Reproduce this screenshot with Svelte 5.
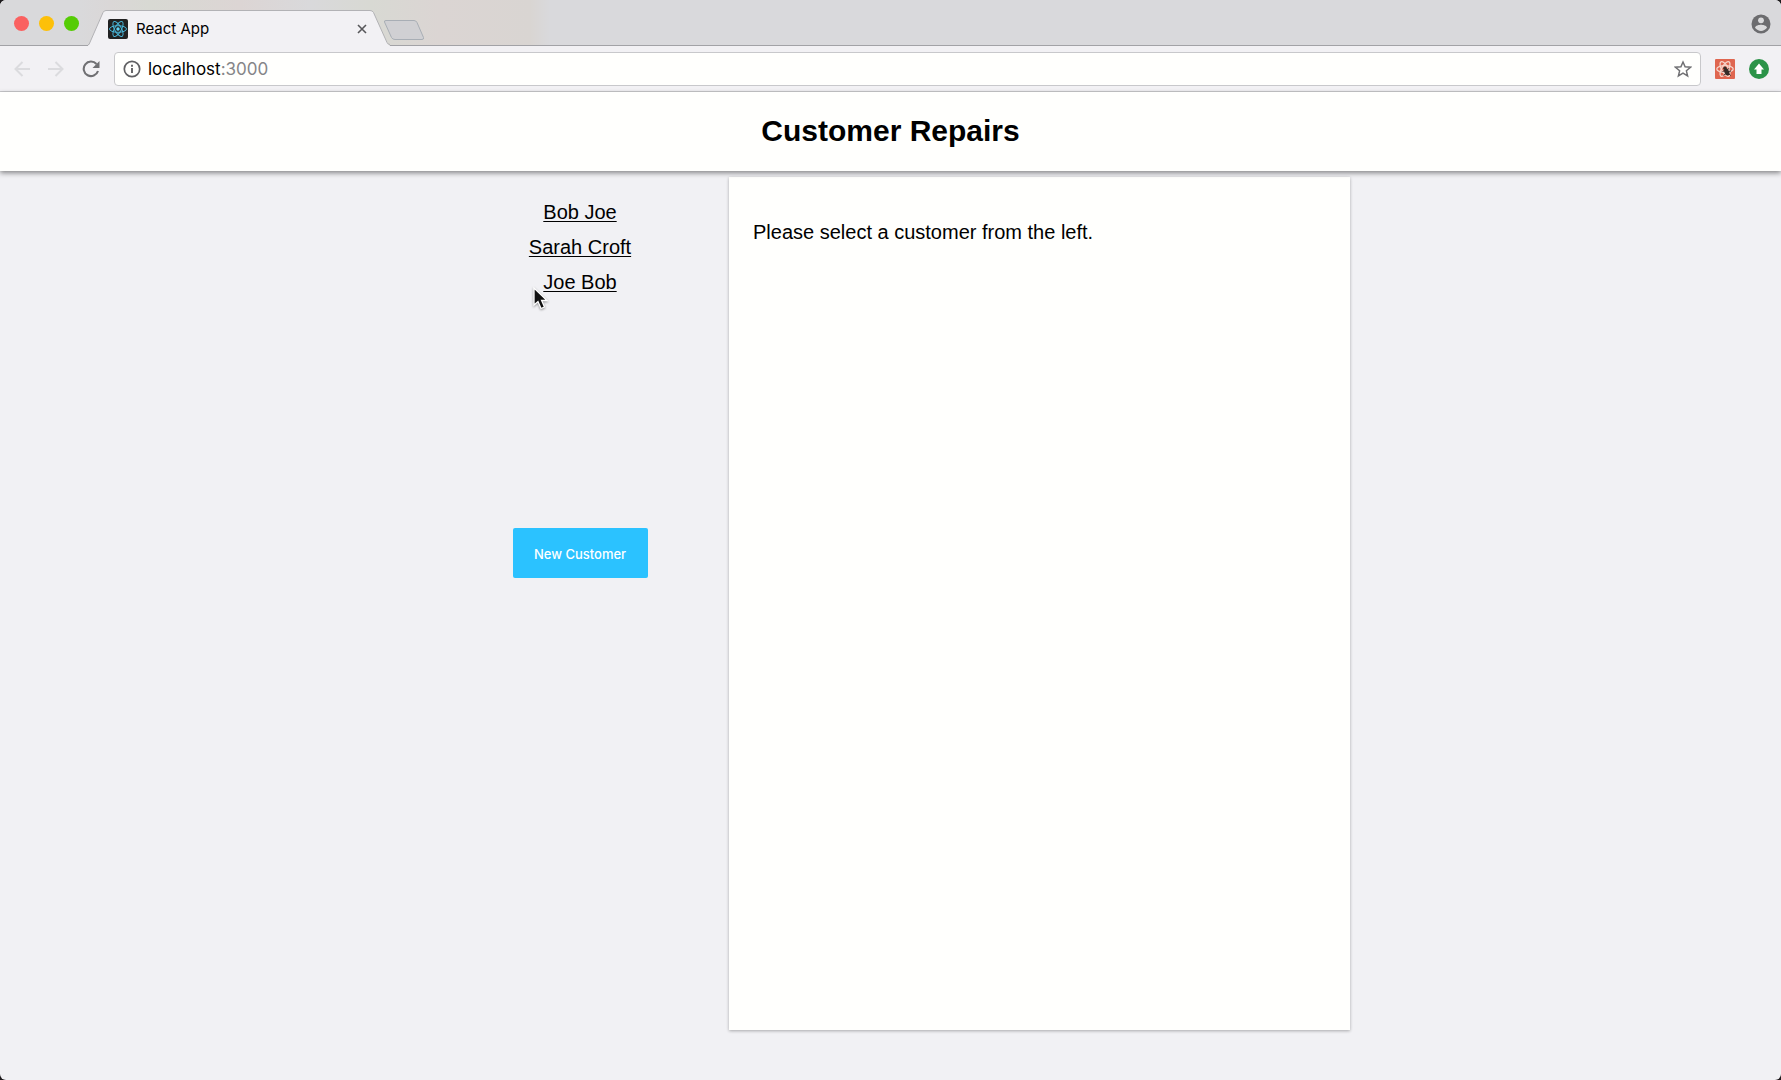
<script>
  const customers = ['Bob Joe', 'Sarah Croft', 'Joe Bob'];
  let url = $state('localhost:3000');
  const petals = [0, 60, 120];
</script>

<div class="window">
  <div class="tabstrip">
    <div class="lights">
      <button class="light red" aria-label="Close window"></button>
      <button class="light yellow" aria-label="Minimize window"></button>
      <button class="light green" aria-label="Zoom window"></button>
    </div>
    <div class="tab">
      <svg class="shape" viewBox="0 0 302 36" aria-hidden="true">
        <path d="M0 35.5 L1 34.500 L15 2.500 Q16 .5 18 .5 H282 Q284.500 .5 285.500 2.500 L300 34.500 L302 35.500 V36 H0Z" fill="#f2f1f4" />
        <path d="M0 34.500 H1 L15 2.500 Q16 .5 18 .5 H282 Q284.500 .5 285.500 2.500 L299 32.500 Q300 34.500 302 34.500" fill="none" stroke="#b2b2b5" />
      </svg>
      <svg class="favicon" viewBox="0 0 20 20" aria-hidden="true">
        <rect width="20" height="20" rx="2" fill="#222" />
        {#each petals as angle}
          <ellipse cx="10" cy="10" rx="8.500" ry="3.300" fill="none" stroke="#48b5d8" stroke-width="1" transform="rotate({angle} 10 10)" />
        {/each}
        <circle cx="10" cy="10" r="1.700" fill="#5fd3f5" />
      </svg>
      <span class="tab-title">React App</span>
      <button class="icon" aria-label="Close tab">
        <svg width="10" height="10" viewBox="0 0 10 10"><path d="M1 1 9 9M9 1 1 9" stroke="#57575a" stroke-width="1.600" /></svg>
      </button>
    </div>
    <button class="icon newtab" aria-label="New tab">
      <svg width="42" height="22" viewBox="0 0 42 22"><path d="M3 1.500H31Q33 1.500 34 3.500L40.500 18.500Q41 20.500 39 20.500H12Q9.500 20.500 8.500 18.500L1.500 3Q1 1.500 3 1.500Z" fill="#d0d0d3" stroke="#a8aeb5" /></svg>
    </button>
    <button class="icon profile" aria-label="Profile">
      <svg width="20" height="20" viewBox="0 0 20 20"><circle cx="10" cy="10" r="9.500" fill="#6c6c6f" /><circle cx="10" cy="6.300" r="2.900" fill="#dadadc" /><path d="M4 13.800C4.500 11.500 8 10.800 10 10.800S15.500 11.500 16 13.800C14.500 15.800 12.300 17 10 17S5.500 15.800 4 13.800Z" fill="#dadadc" /></svg>
    </button>
  </div>

  <div class="toolbar">
    <button class="icon nav" aria-label="Back">
      <svg width="16" height="16" viewBox="0 0 16 16"><path d="M16 8H1.500M8.500 1 1.500 8 8.500 15" fill="none" stroke="#dbdbde" stroke-width="2" /></svg>
    </button>
    <button class="icon nav" aria-label="Forward">
      <svg width="16" height="16" viewBox="0 0 16 16"><path d="M0 8H14.500M7.500 1 14.500 8 7.500 15" fill="none" stroke="#dbdbde" stroke-width="2" /></svg>
    </button>
    <button class="icon" aria-label="Reload">
      <svg width="18" height="18" viewBox="0 0 18 18"><path d="M14.500 4A7.300 7.300 0 1 0 16 11" fill="none" stroke="#707073" stroke-width="2.100" /><path d="M17.500 1V8H10.500Z" fill="#707073" /></svg>
    </button>
    <div class="omnibox">
      <svg width="18" height="18" viewBox="0 0 18 18" aria-hidden="true"><circle cx="9" cy="9" r="7.700" fill="none" stroke="#606063" stroke-width="1.700" /><path d="M9 8V13M9 4.800V6.700" stroke="#606063" stroke-width="1.900" /></svg>
      <label class="address">
        <span class="url" aria-hidden="true">localhost<span class="port">:3000</span></span>
        <input type="text" aria-label="Address" bind:value={url} />
      </label>
      <button class="icon" aria-label="Bookmark">
        <svg width="18" height="18" viewBox="0 0 18 18"><path d="M9 2 11.100 6.700 16.500 7.200 12.400 10.800 13.600 16 9 13.200 4.400 16 5.600 10.800 1.500 7.200 6.900 6.700Z" fill="none" stroke="#707073" stroke-width="1.500" /></svg>
      </button>
    </div>
    <button class="icon" aria-label="React Developer Tools">
      <svg width="20" height="20" viewBox="0 0 20 20">
        <rect width="20" height="20" rx="1" fill="#df6650" />
        {#each petals as angle}
          <ellipse cx="10" cy="10" rx="8.200" ry="3.300" fill="none" stroke="#f5d5cb" stroke-width="1.300" transform="rotate({angle} 10 10)" />
        {/each}
        <ellipse cx="11.800" cy="13" rx="2.300" ry="3.700" transform="rotate(-25 11.800 13)" fill="#342b27" />
        <circle cx="10" cy="9.200" r="1.700" fill="#342b27" />
        <path d="M7.500 12.500 10 11.500M8.500 16.500 11 14.500M12 11 14 9.500M13.500 12.500 16 12M14 15 15.800 16.500" stroke="#342b27" />
      </svg>
    </button>
    <button class="icon" aria-label="Update available">
      <svg width="20" height="20" viewBox="0 0 20 20"><circle cx="10" cy="10" r="10" fill="#2b9348" /><path d="M10 4.500 15 10.500H12.500V15H7.500V10.500H5Z" fill="#fff" /></svg>
    </button>
  </div>

  <header>
    <h1>Customer Repairs</h1>
  </header>

  <main>
    <aside>
      <nav>
        {#each customers as name}
          <a href="#customer">{name}</a>
        {/each}
      </nav>
      <button class="new-customer">New Customer</button>
    </aside>
    <section>
      <p>Please select a customer from the left.</p>
    </section>
  </main>

  <svg class="cursor" width="18" height="25" viewBox="0 0 18 25" aria-hidden="true">
    <path d="M2 2V19L6 15.500 9 22.500 12.500 21 9.600 14.500H15Z" fill="#111" stroke="#fff" stroke-width="1.300" />
  </svg>
</div>

<style>
  :global(body) {
    margin: 0;
    background: #1d1a1c;
  }
  .window {
    position: relative;
    display: flex;
    flex-direction: column;
    min-height: 100vh;
    overflow: hidden;
    border-radius: 6px;
    background: #f1f1f4;
    font-family: 'Liberation Sans', Arial, sans-serif;
    color: #000;
  }
  button {
    margin: 0;
    padding: 0;
    border: 0;
    background: none;
    font: inherit;
    cursor: pointer;
  }
  .icon {
    display: flex;
    flex: none;
    align-items: center;
    justify-content: center;
  }
  .tabstrip {
    display: flex;
    box-sizing: border-box;
    height: 46px;
    padding: 0 10px 0 14px;
    border-bottom: 1px solid #a2a2a6;
    background: linear-gradient(90deg, #d9d9db 80px, #dad7d7 110px, #d8d9d3 150px, #dcd5d4 240px, #d9d9db 310px, #d8d9d3 370px, #dbd5d3 440px, #d9d5d2 530px, #d9d9dc 550px);
  }
  .lights {
    display: flex;
    gap: 10px;
    padding-top: 16px;
    width: 74px;
  }
  .light {
    width: 15px;
    height: 15px;
    border-radius: 50%;
  }
  .red { background: #fa6160; }
  .yellow { background: #fdc009; }
  .green { background: #55cc05; }
  .tab {
    position: relative;
    display: flex;
    align-items: center;
    box-sizing: border-box;
    width: 302px;
    height: 36px;
    margin-top: 10px;
    padding: 1px 22px 0 20px;
    gap: 8px;
  }
  .shape {
    position: absolute;
    inset: 0;
    width: 100%;
    height: 100%;
  }
  .favicon {
    position: relative;
    flex: none;
    width: 20px;
    height: 20px;
  }
  .tab-title {
    position: relative;
    flex: 1;
    font: 15px/20px Inter, sans-serif;
  }
  .tab .icon {
    position: relative;
    width: 12px;
    height: 20px;
  }
  .newtab {
    align-self: flex-start;
    margin: 19px 0 0 -7px;
  }
  .profile {
    align-self: flex-start;
    margin: 14px 0 0 auto;
  }
  .toolbar {
    display: flex;
    align-items: center;
    box-sizing: border-box;
    height: 46px;
    padding: 0 12px 0 14px;
    gap: 14px;
    border-bottom: 1px solid #cacacd;
    background: #f2f1f4;
  }
  .nav {
    margin-right: 4px;
  }
  .omnibox {
    display: flex;
    flex: 1;
    align-items: center;
    box-sizing: border-box;
    height: 34px;
    padding: 0 8px;
    gap: 7px;
    border: 1px solid #c8c8cb;
    border-radius: 4px;
    background: #fffffd;
  }
  .address {
    display: grid;
    flex: 1;
    font: 17px/24px Inter, sans-serif;
  }
  .url,
  input {
    grid-area: 1 / 1;
  }
  .port {
    color: #858588;
  }
  input {
    min-width: 0;
    padding: 0;
    border: 0;
    outline: 0;
    background: none;
    font: inherit;
    color: transparent;
  }
  header {
    z-index: 1;
    background: #fffffd;
    box-shadow: 0 2px 5px rgba(0, 0, 0, 0.45);
  }
  h1 {
    margin: 0;
    padding: 21px 0 22px;
    font-size: 30px;
    line-height: 36px;
    text-align: center;
  }
  main {
    display: grid;
    flex: 1;
    grid-template-columns: 298fr 621fr;
    box-sizing: border-box;
    width: 100%;
    max-width: 919px;
    margin: 0 auto;
    padding: 6px 0 50px;
    font-size: 20px;
  }
  aside {
    display: flex;
    flex-direction: column;
    align-items: center;
    padding-top: 23px;
  }
  nav {
    display: flex;
    flex-direction: column;
    align-items: center;
    gap: 11px;
    height: 328px;
  }
  a {
    line-height: 24px;
    color: #000;
    text-decoration-thickness: 1px;
    text-underline-offset: 2px;
  }
  .new-customer {
    width: 135px;
    height: 50px;
    padding-top: 2px;
    border-radius: 2px;
    background: #2bc2ff;
    color: #fff;
    font: 500 13px/20px Inter, sans-serif;
  }
  section {
    background: #fffffd;
    box-shadow: 0 1px 3px rgba(0, 0, 0, 0.3);
  }
  p {
    margin: 0;
    padding: 43px 24px;
    line-height: 24px;
  }
  .cursor {
    position: absolute;
    top: 286px;
    left: 532px;
    filter: drop-shadow(0 1px 1px rgba(0, 0, 0, 0.4));
  }
</style>
